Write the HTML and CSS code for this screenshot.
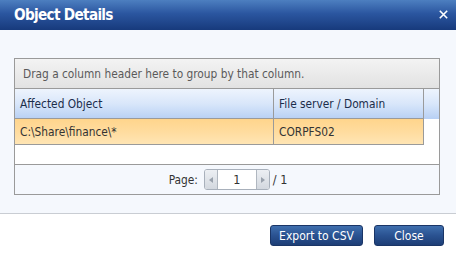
FILE: index.html
```html
<!DOCTYPE html>
<html>
<head>
<meta charset="utf-8">
<link rel="stylesheet" href="styles.css">
</head>
<body>
<div class="dialog">
  <div class="titlebar">
    <span class="title">Object Details</span>
    <svg class="close" width="9" height="9" viewBox="0 0 9 9"><path d="M0.8 0.8 L8.2 8.2 M8.2 0.8 L0.8 8.2" stroke="#ffffff" stroke-width="1.6" fill="none"/></svg>
  </div>
  <div class="content">
    <div class="grid">
      <div class="group-panel">Drag a column header here to group by that column.</div>
      <div class="header-row">
        <div class="cell col1">Affected Object</div>
        <div class="cell col2">File server / Domain</div>
        <div class="spacer"></div>
      </div>
      <div class="data-area">
        <div class="data-row">
          <div class="cell col1">C:\Share\finance\*</div>
          <div class="cell col2">CORPFS02</div>
        </div>
      </div>
      <div class="pager">
        <span class="pager-label">Page:</span>
        <div class="spin">
          <span class="spin-btn"><svg width="4" height="6" viewBox="0 0 4 6"><path d="M4 0 L0 3 L4 6 Z" fill="#9aa2ad"/></svg></span>
          <span class="spin-value">1</span>
          <span class="spin-btn"><svg width="4" height="6" viewBox="0 0 4 6"><path d="M0 0 L4 3 L0 6 Z" fill="#9aa2ad"/></svg></span>
        </div>
        <span class="pager-total">/ 1</span>
      </div>
    </div>
  </div>
  <div class="footer">
    <button class="btn">Export to CSV</button>
    <button class="btn btn-close">Close</button>
  </div>
</div>
</body>
</html>
```

FILE: styles.css
```css
html, body {
  margin: 0;
  padding: 0;
}
body {
  width: 456px;
  height: 253px;
  background: #ffffff;
  font-family: "DejaVu Sans Condensed", "DejaVu Sans", sans-serif;
  font-size: 11.8px;
  overflow: hidden;
}
.dialog {
  width: 456px;
  height: 253px;
  display: flex;
  flex-direction: column;
}
.titlebar {
  height: 30px;
  background: linear-gradient(to bottom, #4d7fc0 0%, #2b56a0 45%, #173a7c 100%);
  display: flex;
  align-items: center;
  justify-content: space-between;
  padding: 0 8px 0 14px;
  box-sizing: border-box;
}
.title {
  color: #ffffff;
  font-weight: bold;
  font-size: 15.2px;
  letter-spacing: -0.7px;
  margin-top: -1px;
}
.close {
  display: block;
  margin-top: -1px;
}
.content {
  height: 183px;
  background: #f5f8fd;
  padding: 28px 16px 0 14px;
  box-sizing: border-box;
}
.grid {
  border: 1px solid #9a9a9a;
  height: 137px;
  box-sizing: border-box;
  display: flex;
  flex-direction: column;
}
.group-panel {
  height: 30px;
  box-sizing: border-box;
  border-bottom: 1px solid #9a9a9a;
  background: linear-gradient(to bottom, #f3f3f3, #e2e2e2);
  color: #5a5a5a;
  padding-left: 8px;
  display: flex;
  align-items: center;
}
.header-row {
  height: 30px;
  box-sizing: border-box;
  display: flex;
  background: linear-gradient(to bottom, #eef4fd 0%, #d8e6fa 50%, #b7d0f4 100%);
  color: #1b2d4a;
}
.header-row .cell {
  border-bottom: 1px solid #9a9a9a;
}
.cell {
  box-sizing: border-box;
  display: flex;
  align-items: center;
  padding-left: 5px;
}
.col1 {
  width: 259px;
  border-right: 1px solid #9a9a9a;
}
.col2 {
  width: 150px;
  border-right: 1px solid #9a9a9a;
}
.spacer {
  flex: 1;
}
.data-area {
  height: 45px;
  background: #ffffff;
  border-bottom: 1px solid #9a9a9a;
}
.data-row {
  height: 26px;
  display: flex;
  background: linear-gradient(to bottom, #ffd58c 0%, #ffdc9f 50%, #ffe6b6 100%);
  width: 409px;
  color: #333333;
}
.data-row .cell {
  border-bottom: 1px solid #9a9a9a;
}
.pager {
  flex: 1;
  background: #f5f8fd;
  display: flex;
  align-items: center;
  justify-content: center;
  color: #333333;
  padding-left: 2px;
}
.pager-label {
  margin-right: 6px;
}
.spin {
  width: 66px;
  height: 21px;
  box-sizing: border-box;
  border: 1px solid #a8b0bb;
  border-radius: 3px;
  display: flex;
  background: #ffffff;
  overflow: hidden;
}
.spin-btn {
  width: 12px;
  background: linear-gradient(to bottom, #eceff3, #d3d8df);
  display: flex;
  align-items: center;
  justify-content: center;
}
.spin-btn:first-child {
  border-right: 1px solid #b0b7c0;
}
.spin-btn:last-child {
  border-left: 1px solid #b0b7c0;
}
.spin-value {
  flex: 1;
  text-align: center;
  line-height: 19px;
  font-size: 12.5px;
}
.pager-total {
  margin-left: 3px;
  font-size: 12.5px;
}
.footer {
  flex: 1;
  border-top: 1px solid #c9cdd3;
  background: #ffffff;
  display: flex;
  justify-content: flex-end;
  align-items: flex-start;
  padding: 11px 12px 0 0;
  gap: 11px;
}
.btn {
  height: 21px;
  border: 1px solid #1a3566;
  border-radius: 3px;
  background: linear-gradient(to bottom, #3f6fae 0%, #2a5291 50%, #1d3e76 100%);
  color: #ffffff;
  font-family: "DejaVu Sans Condensed", "DejaVu Sans", sans-serif;
  font-size: 12px;
  padding: 0;
  width: 93px;
}
.btn-close {
  width: 70px;
}
```
